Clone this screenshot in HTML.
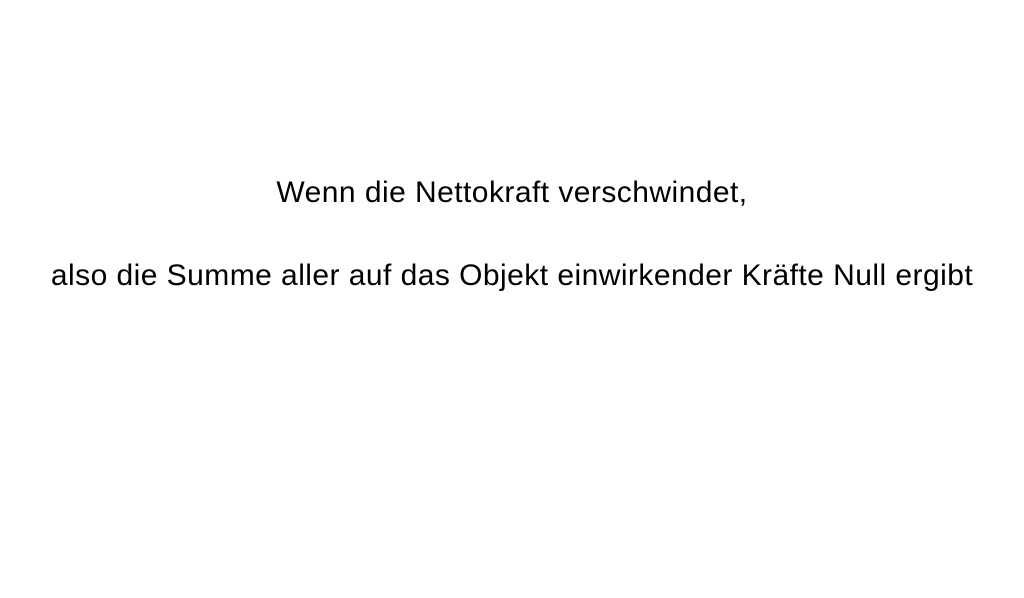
<!DOCTYPE html>
<html><head><meta charset="utf-8"><style>
html,body{margin:0;padding:0;background:#fff;width:1024px;height:598px;overflow:hidden}
.l{position:absolute;left:0;width:1024px;text-align:center;font-family:"Liberation Sans",sans-serif;font-size:30px;letter-spacing:0.45px;color:#000;white-space:nowrap;line-height:30px}
</style></head><body>
<div class="l" style="top:178px">Wenn die Nettokraft verschwindet,</div>
<div class="l" style="top:261px">also die Summe aller auf das Objekt einwirkender Kräfte Null ergibt</div>
</body></html>
